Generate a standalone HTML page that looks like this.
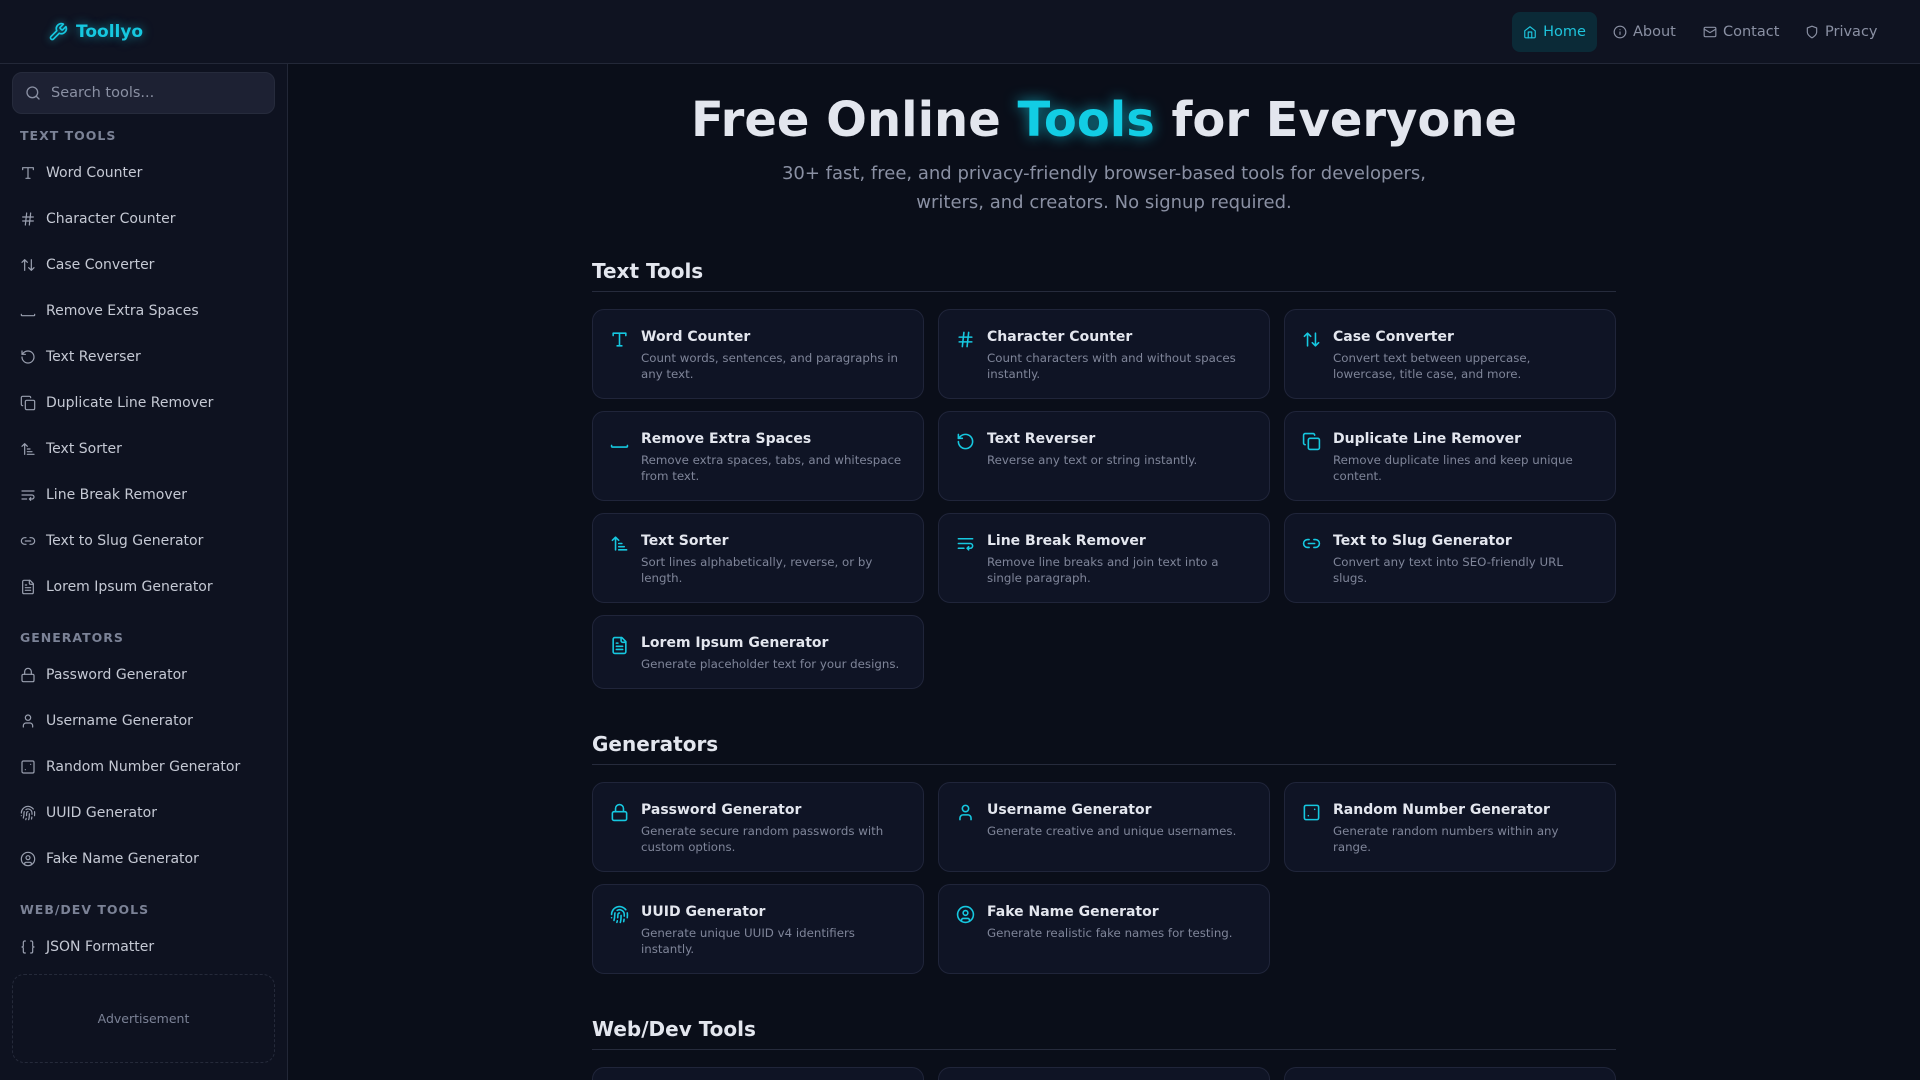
<!DOCTYPE html>
<html><head><meta charset="utf-8"><style>
*{box-sizing:border-box;margin:0;padding:0}
html,body{width:1920px;height:1080px;overflow:hidden}
body{background:#0a0e19;font-family:"DejaVu Sans","Liberation Sans",sans-serif;color:#e2e5ee}
#wrap{position:relative;width:1920px;height:1080px;overflow:hidden}
svg{fill:none;stroke:currentColor;stroke-width:2;stroke-linecap:round;stroke-linejoin:round}
.header{position:absolute;left:0;top:0;width:1920px;height:64px;background:#0f1321;border-bottom:1px solid #232838}
.logo{position:absolute;left:48px;top:22px;display:flex;align-items:center;color:#16c8e0;font-weight:bold;font-size:17px;text-shadow:0 0 10px rgba(22,200,224,.6)}
.logo svg{width:20px;height:20px;margin-right:8px;filter:drop-shadow(0 0 4px rgba(22,200,224,.6))}
.nav{position:absolute;top:12px;height:40px;display:flex;align-items:center;font-size:14.5px;color:#8a90a3}
.nav svg{width:14px;height:14px;margin-right:6px}
.home{left:1512px;width:85px;background:#0b2a37;border-radius:8px;color:#1ec4dc;justify-content:center}
.side{position:absolute;left:0;top:64px;width:288px;height:1016px;background:#0e1220;border-right:1px solid #222737}
.search{position:absolute;left:12px;top:8px;width:263px;height:42px;background:#1d2133;border:1px solid #262b3c;border-radius:10px;color:#8a90a3;font-size:14.5px;display:flex;align-items:center;padding-left:12px}
.search svg{width:16px;height:16px;margin-right:10px}
.lab{position:absolute;left:20px;font-size:12.5px;font-weight:bold;letter-spacing:1px;color:#7b8296}
.it{position:absolute;left:20px;font-size:14px;color:#c5c9d4;display:flex;align-items:center;height:20px;margin-top:1px}
.it svg{width:16px;height:16px;margin-right:10px;color:#9aa0b0;stroke-width:1.8}
.ad{position:absolute;left:12px;top:910px;width:263px;height:89px;border:1px dashed #252a3a;border-radius:12px;color:#7b8296;font-size:12.5px;display:flex;align-items:center;justify-content:center}
h1{position:absolute;left:288px;width:1632px;top:90px;text-align:center;font-size:48px;font-weight:bold;color:#e3e6ee;line-height:60px}
h1 span{color:#12cde4;text-shadow:0 0 14px rgba(18,205,228,.65)}
.sub{position:absolute;left:288px;width:1632px;top:159px;text-align:center;font-size:18px;color:#8a90a3;line-height:29px}
.sh{position:absolute;left:592px;width:1024px;font-size:20px;font-weight:bold;color:#e3e6ee;border-bottom:1px solid #262b3c;height:36px;line-height:30px}
.card{position:absolute;width:332px;background:#0f1425;border:1px solid #20253a;border-radius:12px}
.card svg{position:absolute;left:17px;top:20px;width:19px;height:19px;color:#16c8e0}
.card b{position:absolute;left:48px;top:19px;font-size:14px;color:#e3e6ee}
.card p{position:absolute;left:48px;top:40px;right:14px;font-size:11.8px;line-height:16px;color:#7f8599}
</style></head><body><div id="wrap">
<div class="header">
<div class="logo"><svg viewBox="0 0 24 24"><path d="M14.7 6.3a1 1 0 0 0 0 1.4l1.6 1.6a1 1 0 0 0 1.4 0l3.77-3.77a6 6 0 0 1-7.940 7.94l-6.91 6.91a2.12 2.12 0 0 1-3-3l6.91-6.91a6 6 0 0 1 7.94-7.94l-3.76 3.76z"/></svg>Toollyo</div>
<div class="nav home"><svg viewBox="0 0 24 24"><path d="M3 10l9-7 9 7v10a2 2 0 0 1-2 2H5a2 2 0 0 1-2-2z"/><path d="M9 22V12h6v10"/></svg>Home</div>
<div class="nav" style="left:1613px"><svg viewBox="0 0 24 24"><circle cx="12" cy="12" r="10"/><path d="M12 16v-4M12 8h.01"/></svg>About</div>
<div class="nav" style="left:1703px"><svg viewBox="0 0 24 24"><rect x="2" y="4" width="20" height="16" rx="2"/><path d="m22 7-10 6L2 7"/></svg>Contact</div>
<div class="nav" style="left:1805px"><svg viewBox="0 0 24 24"><path d="M12 22s8-4 8-10V5l-8-3-8 3v7c0 6 8 10 8 10z"/></svg>Privacy</div>
</div>
<div class="side">
<div class="search"><svg viewBox="0 0 24 24"><circle cx="11" cy="11" r="8"/><path d="m21 21-4.3-4.3"/></svg>Search tools...</div>
<div class="lab" style="top:64px">TEXT TOOLS</div>
<div class="it" style="top:98px"><svg viewBox="0 0 24 24"><path d="M4 7V4h16v3M9 20h6M12 4v16"/></svg>Word Counter</div>
<div class="it" style="top:144px"><svg viewBox="0 0 24 24"><path d="M4 9h16M4 15h16M10 3 8 21M16 3l-2 18"/></svg>Character Counter</div>
<div class="it" style="top:190px"><svg viewBox="0 0 24 24"><path d="m21 16-4 4-4-4M17 20V4M3 8l4-4 4 4M7 4v16"/></svg>Case Converter</div>
<div class="it" style="top:236px"><svg viewBox="0 0 24 24"><path d="M22 17v1c0 .5-.5 1-1 1H3c-.5 0-1-.5-1-1v-1"/></svg>Remove Extra Spaces</div>
<div class="it" style="top:282px"><svg viewBox="0 0 24 24"><path d="M3 12a9 9 0 1 0 9-9 9.75 9.75 0 0 0-6.74 2.74L3 8"/><path d="M3 3v5h5"/></svg>Text Reverser</div>
<div class="it" style="top:328px"><svg viewBox="0 0 24 24"><rect x="8" y="8" width="14" height="14" rx="2"/><path d="M4 16c-1.1 0-2-.9-2-2V4c0-1.1.9-2 2-2h10c1.1 0 2 .9 2 2"/></svg>Duplicate Line Remover</div>
<div class="it" style="top:374px"><svg viewBox="0 0 24 24"><path d="m3 8 4-4 4 4M7 4v16M11 12h4M11 16h7M11 20h10"/></svg>Text Sorter</div>
<div class="it" style="top:420px"><svg viewBox="0 0 24 24"><path d="M3 6h18M3 12h15a3 3 0 1 1 0 6h-4M16 16l-2 2 2 2M3 18h7"/></svg>Line Break Remover</div>
<div class="it" style="top:466px"><svg viewBox="0 0 24 24"><path d="M9 17H7A5 5 0 0 1 7 7h2M15 7h2a5 5 0 1 1 0 10h-2M8 12h8"/></svg>Text to Slug Generator</div>
<div class="it" style="top:512px"><svg viewBox="0 0 24 24"><path d="M15 2H6a2 2 0 0 0-2 2v16a2 2 0 0 0 2 2h12a2 2 0 0 0 2-2V7z"/><path d="M14 2v4a2 2 0 0 0 2 2h4M10 9H8M16 13H8M16 17H8"/></svg>Lorem Ipsum Generator</div>
<div class="lab" style="top:566px">GENERATORS</div>
<div class="it" style="top:600px"><svg viewBox="0 0 24 24"><rect x="3" y="11" width="18" height="11" rx="2"/><path d="M7 11V7a5 5 0 0 1 10 0v4"/></svg>Password Generator</div>
<div class="it" style="top:646px"><svg viewBox="0 0 24 24"><path d="M19 21v-2a4 4 0 0 0-4-4H9a4 4 0 0 0-4 4v2"/><circle cx="12" cy="7" r="4"/></svg>Username Generator</div>
<div class="it" style="top:692px"><svg viewBox="0 0 24 24"><rect x="3" y="3" width="18" height="18" rx="2"/><path d="M16 8h.01M8 16h.01"/></svg>Random Number Generator</div>
<div class="it" style="top:738px"><svg viewBox="0 0 24 24"><path d="M12 10a2 2 0 0 0-2 2c0 1.02-.1 2.51-.26 4M14 13.12c0 2.38 0 6.38-1 8.88M17.29 21.02c.12-.6.43-2.3.5-3.02M2 12a10 10 0 0 1 18-6M2 16h.01M21.8 16c.2-2 .131-5.354 0-6M5 19.5C5.5 18 6 15 6 12a6 6 0 0 1 .34-2M8.65 22c.21-.66.45-1.32.57-2M9 6.8a6 6 0 0 1 9 5.2v2"/></svg>UUID Generator</div>
<div class="it" style="top:784px"><svg viewBox="0 0 24 24"><circle cx="12" cy="12" r="10"/><circle cx="12" cy="10" r="3"/><path d="M7 20.662V19a2 2 0 0 1 2-2h6a2 2 0 0 1 2 2v1.662"/></svg>Fake Name Generator</div>
<div class="lab" style="top:838px">WEB/DEV TOOLS</div>
<div class="it" style="top:872px"><svg viewBox="0 0 24 24"><path d="M8 3H7a2 2 0 0 0-2 2v5a2 2 0 0 1-2 2 2 2 0 0 1 2 2v5c0 1.1.9 2 2 2h1M16 21h1a2 2 0 0 0 2-2v-5c0-1.1.9-2 2-2a2 2 0 0 1-2-2V5a2 2 0 0 0-2-2h-1"/></svg>JSON Formatter</div>
<div class="ad">Advertisement</div>
</div>

<h1>Free Online <span>Tools</span> for Everyone</h1>
<div class="sub">30+ fast, free, and privacy-friendly browser-based tools for developers,<br>writers, and creators. No signup required.</div>

<div class="sh" style="top:256px">Text Tools</div>
<div class="card" style="left:592px;top:309px;height:90px"><svg viewBox="0 0 24 24"><path d="M4 7V4h16v3M9 20h6M12 4v16"/></svg><b>Word Counter</b><p>Count words, sentences, and paragraphs in any text.</p></div>
<div class="card" style="left:938px;top:309px;height:90px"><svg viewBox="0 0 24 24"><path d="M4 9h16M4 15h16M10 3 8 21M16 3l-2 18"/></svg><b>Character Counter</b><p>Count characters with and without spaces instantly.</p></div>
<div class="card" style="left:1284px;top:309px;height:90px"><svg viewBox="0 0 24 24"><path d="m21 16-4 4-4-4M17 20V4M3 8l4-4 4 4M7 4v16"/></svg><b>Case Converter</b><p>Convert text between uppercase,<br>lowercase, title case, and more.</p></div>
<div class="card" style="left:592px;top:411px;height:90px"><svg viewBox="0 0 24 24"><path d="M22 17v1c0 .5-.5 1-1 1H3c-.5 0-1-.5-1-1v-1"/></svg><b>Remove Extra Spaces</b><p>Remove extra spaces, tabs, and whitespace from text.</p></div>
<div class="card" style="left:938px;top:411px;height:90px"><svg viewBox="0 0 24 24"><path d="M3 12a9 9 0 1 0 9-9 9.75 9.75 0 0 0-6.74 2.74L3 8"/><path d="M3 3v5h5"/></svg><b>Text Reverser</b><p>Reverse any text or string instantly.</p></div>
<div class="card" style="left:1284px;top:411px;height:90px"><svg viewBox="0 0 24 24"><rect x="8" y="8" width="14" height="14" rx="2"/><path d="M4 16c-1.1 0-2-.9-2-2V4c0-1.1.9-2 2-2h10c1.1 0 2 .9 2 2"/></svg><b>Duplicate Line Remover</b><p>Remove duplicate lines and keep unique content.</p></div>
<div class="card" style="left:592px;top:513px;height:90px"><svg viewBox="0 0 24 24"><path d="m3 8 4-4 4 4M7 4v16M11 12h4M11 16h7M11 20h10"/></svg><b>Text Sorter</b><p>Sort lines alphabetically, reverse, or by length.</p></div>
<div class="card" style="left:938px;top:513px;height:90px"><svg viewBox="0 0 24 24"><path d="M3 6h18M3 12h15a3 3 0 1 1 0 6h-4M16 16l-2 2 2 2M3 18h7"/></svg><b>Line Break Remover</b><p>Remove line breaks and join text into a single paragraph.</p></div>
<div class="card" style="left:1284px;top:513px;height:90px"><svg viewBox="0 0 24 24"><path d="M9 17H7A5 5 0 0 1 7 7h2M15 7h2a5 5 0 1 1 0 10h-2M8 12h8"/></svg><b>Text to Slug Generator</b><p>Convert any text into SEO-friendly URL<br>slugs.</p></div>
<div class="card" style="left:592px;top:615px;height:74px"><svg viewBox="0 0 24 24"><path d="M15 2H6a2 2 0 0 0-2 2v16a2 2 0 0 0 2 2h12a2 2 0 0 0 2-2V7z"/><path d="M14 2v4a2 2 0 0 0 2 2h4M10 9H8M16 13H8M16 17H8"/></svg><b>Lorem Ipsum Generator</b><p style="white-space:nowrap">Generate placeholder text for your designs.</p></div>

<div class="sh" style="top:729px">Generators</div>
<div class="card" style="left:592px;top:782px;height:90px"><svg viewBox="0 0 24 24"><rect x="3" y="11" width="18" height="11" rx="2"/><path d="M7 11V7a5 5 0 0 1 10 0v4"/></svg><b>Password Generator</b><p>Generate secure random passwords with custom options.</p></div>
<div class="card" style="left:938px;top:782px;height:90px"><svg viewBox="0 0 24 24"><path d="M19 21v-2a4 4 0 0 0-4-4H9a4 4 0 0 0-4 4v2"/><circle cx="12" cy="7" r="4"/></svg><b>Username Generator</b><p>Generate creative and unique usernames.</p></div>
<div class="card" style="left:1284px;top:782px;height:90px"><svg viewBox="0 0 24 24"><rect x="3" y="3" width="18" height="18" rx="2"/><path d="M16 8h.01M8 16h.01"/></svg><b>Random Number Generator</b><p>Generate random numbers within any<br>range.</p></div>
<div class="card" style="left:592px;top:884px;height:90px"><svg viewBox="0 0 24 24"><path d="M12 10a2 2 0 0 0-2 2c0 1.02-.1 2.51-.26 4M14 13.12c0 2.380 0 6.38-1 8.88M17.29 21.02c.12-.6.43-2.3.5-3.02M2 12a10 10 0 0 1 18-6M2 16h.01M21.8 16c.2-2 .131-5.354 0-6M5 19.5C5.5 18 6 15 6 12a6 6 0 0 1 .34-2M8.65 22c.21-.66.45-1.32.57-2M9 6.8a6 6 0 0 1 9 5.2v2"/></svg><b>UUID Generator</b><p>Generate unique UUID v4 identifiers instantly.</p></div>
<div class="card" style="left:938px;top:884px;height:90px"><svg viewBox="0 0 24 24"><circle cx="12" cy="12" r="10"/><circle cx="12" cy="10" r="3"/><path d="M7 20.662V19a2 2 0 0 1 2-2h6a2 2 0 0 1 2 2v1.662"/></svg><b>Fake Name Generator</b><p>Generate realistic fake names for testing.</p></div>

<div class="sh" style="top:1014px">Web/Dev Tools</div>
<div class="card" style="left:592px;top:1067px;height:13px;border-bottom:none;border-radius:12px 12px 0 0"></div>
<div class="card" style="left:938px;top:1067px;height:13px;border-bottom:none;border-radius:12px 12px 0 0"></div>
<div class="card" style="left:1284px;top:1067px;height:13px;border-bottom:none;border-radius:12px 12px 0 0"></div>
</div></body></html>
